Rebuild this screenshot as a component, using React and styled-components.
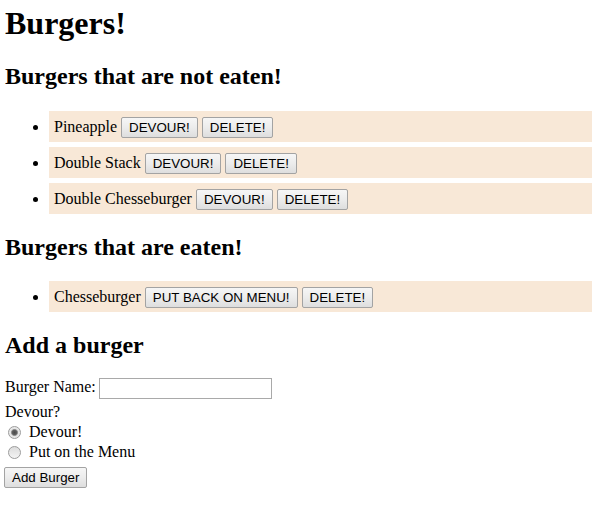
import React from "react";
import styled, { createGlobalStyle } from "styled-components";

const GlobalStyle = createGlobalStyle`
  html, body { margin: 0; padding: 0; background: #ffffff; }
  body {
    font-family: "Liberation Serif", "Times New Roman", serif;
    font-size: 16px;
    color: #000000;
  }
`;

const Page = styled.div`
  padding: 5px 0 0 5px;
`;

const Title = styled.h1`
  margin: 0 0 21.44px;
  font-size: 32px;
  line-height: 36.8px;
  font-weight: bold;
`;

const SectionTitle = styled.h2`
  margin: 19.92px 0 ${(p) => (p.$tight ? "18px" : "19.92px")};
  font-size: 24px;
  line-height: 27.6px;
  font-weight: bold;
`;

const BurgerList = styled.ul`
  margin: 16px 0;
  padding-left: 44px;
  list-style: disc;
`;

const BurgerItem = styled.li`
  background: #f8e8d7;
  padding: 5px;
  margin-bottom: 5px;
  line-height: 21px;
  height: 21px;
`;

const Button = styled.button`
  display: inline-block;
  box-sizing: border-box;
  height: 21px;
  padding: 0 7px;
  margin: 0;
  font-family: "Liberation Sans", Arial, sans-serif;
  font-size: 13.33px;
  line-height: 19px;
  color: #000000;
  border: 1px solid #a3a3a3;
  border-radius: 2px;
  background: linear-gradient(#f6f6f6 0%, #ececec 50%, #dedede 100%);
  vertical-align: baseline;
  cursor: default;
`;

const Form = styled.form`
  display: flex;
  flex-direction: column;
  align-items: flex-start;
  margin: 0;
`;

const NameRow = styled.div`
  display: flex;
  align-items: flex-start;
  gap: 3px;
  height: 21px;
`;

const Label = styled.label`
  line-height: 18px;
`;

const TextInput = styled.input`
  box-sizing: border-box;
  width: 173px;
  height: 21px;
  margin: 0;
  padding: 1px 2px;
  border: 1px solid #a9a9a9;
  background: #ffffff;
  font-family: "Liberation Sans", Arial, sans-serif;
  font-size: 13.33px;
  outline: none;
`;

const Question = styled.div`
  margin-top: 3px;
  line-height: 20px;
  height: 20px;
`;

const RadioRow = styled.label`
  display: flex;
  align-items: center;
  height: 20px;
  line-height: 20px;
`;

const Radio = styled.input`
  appearance: none;
  -webkit-appearance: none;
  box-sizing: border-box;
  width: 13px;
  height: 13px;
  margin: 1px 8px 0 3px;
  border-radius: 50%;
  border: 1px solid #9c9c9c;
  background: ${(p) =>
    p.checked
      ? "radial-gradient(circle at 50% 50%, #4a4a4a 0, #5e5e5e 2.2px, #9a9a9a 3.2px, #e4e4e4 3.8px, #f2f2f2 100%)"
      : "linear-gradient(#dcdcdc, #f4f4f4)"};
`;

const SubmitButton = styled(Button)`
  margin-top: 5px;
  margin-left: -1px;
`;

const notEaten = ["Pineapple", "Double Stack", "Double Chesseburger"];
const eaten = ["Chesseburger"];

export default function App() {
  return (
    <>
      <GlobalStyle />
      <Page>
        <Title>Burgers!</Title>
        <SectionTitle>Burgers that are not eaten!</SectionTitle>
        <BurgerList>
          {notEaten.map((name) => (
            <BurgerItem key={name}>
              {name} <Button type="button">DEVOUR!</Button>{" "}
              <Button type="button">DELETE!</Button>
            </BurgerItem>
          ))}
        </BurgerList>
        <SectionTitle>Burgers that are eaten!</SectionTitle>
        <BurgerList>
          {eaten.map((name) => (
            <BurgerItem key={name}>
              {name} <Button type="button">PUT BACK ON MENU!</Button>{" "}
              <Button type="button">DELETE!</Button>
            </BurgerItem>
          ))}
        </BurgerList>
        <SectionTitle $tight>Add a burger</SectionTitle>
        <Form onSubmit={(e) => e.preventDefault()}>
          <NameRow>
            <Label htmlFor="burger-name">Burger Name:</Label>
            <TextInput id="burger-name" type="text" />
          </NameRow>
          <Question>Devour?</Question>
          <RadioRow>
            <Radio type="radio" name="devoured" checked readOnly />
            Devour!
          </RadioRow>
          <RadioRow>
            <Radio type="radio" name="devoured" checked={false} readOnly />
            Put on the Menu
          </RadioRow>
          <SubmitButton type="submit">Add Burger</SubmitButton>
        </Form>
      </Page>
    </>
  );
}
